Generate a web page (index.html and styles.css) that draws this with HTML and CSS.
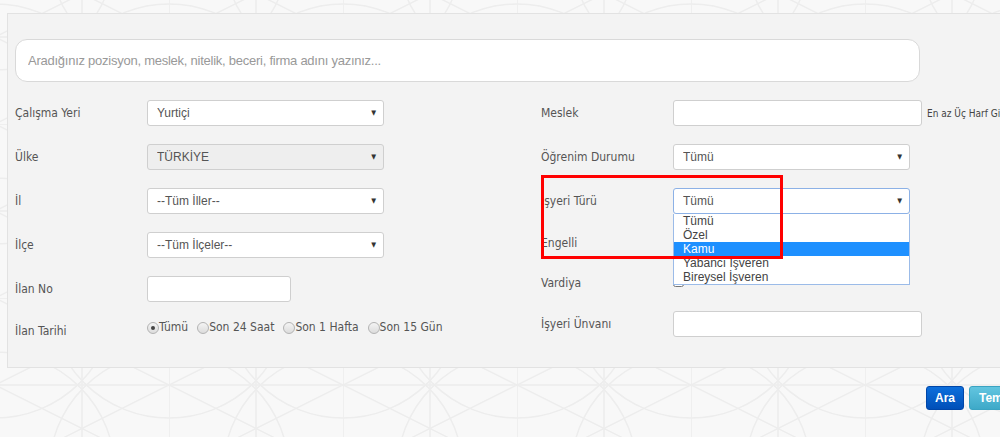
FILE: index.html
```html
<!DOCTYPE html>
<html lang="tr">
  <head>
    <meta charset="UTF-8" />
    <title>İş Ara</title>
    <link rel="stylesheet" href="styles.css">
  </head>
  <body>
    <!-- arka plan deseni -->
    <svg class="bg-pattern" width="100%" height="100%">
      <defs>
        <pattern id="desen" width="174" height="174" patternUnits="userSpaceOnUse" x="-5" y="-50">
          <path d="M0 0V174M87 0V174M0 87H174M0 0H174" />
          <path d="M0 0L174 87M0 87L174 0M0 87L174 174M0 174L174 87" />
          <circle cx="0" cy="0" r="120" />
          <circle cx="174" cy="0" r="120" />
          <circle cx="0" cy="174" r="120" />
          <circle cx="174" cy="174" r="120" />
          <circle cx="87" cy="87" r="120" />
        </pattern>
      </defs>
      <rect width="100%" height="100%" fill="url(#desen)" />
    </svg>

    <div class="page">
      <div class="panel">
        <input class="search" type="text" placeholder="Aradığınız pozisyon, meslek, nitelik, beceri, firma adını yazınız..." />

        <div class="form-grid">
          <div class="col">
            <div class="row">
              <label class="lbl">Çalışma Yeri</label>
              <div class="select-wrap"><select><option>Yurtiçi</option></select></div>
            </div>
            <div class="row">
              <label class="lbl">Ülke</label>
              <div class="select-wrap"><select disabled><option>TÜRKİYE</option></select></div>
            </div>
            <div class="row">
              <label class="lbl">İl</label>
              <div class="select-wrap"><select><option>--Tüm İller--</option></select></div>
            </div>
            <div class="row">
              <label class="lbl">İlçe</label>
              <div class="select-wrap"><select><option>--Tüm İlçeler--</option></select></div>
            </div>
            <div class="row">
              <label class="lbl">İlan No</label>
              <input class="txt txt-short" type="text" />
            </div>
            <div class="row row-radio">
              <label class="lbl">İlan Tarihi</label>
              <div class="radios">
                <label class="radio"><input type="radio" name="tarih" checked />Tümü</label>
                <label class="radio"><input type="radio" name="tarih" />Son 24 Saat</label>
                <label class="radio"><input type="radio" name="tarih" />Son 1 Hafta</label>
                <label class="radio"><input type="radio" name="tarih" />Son 15 Gün</label>
              </div>
            </div>
          </div>

          <div class="col col-right">
            <div class="row">
              <label class="lbl">Meslek</label>
              <input class="txt" type="text" />
              <span class="hint">En az Üç Harf Giriniz</span>
            </div>
            <div class="row">
              <label class="lbl">Öğrenim Durumu</label>
              <div class="select-wrap"><select><option>Tümü</option></select></div>
            </div>
            <div class="row">
              <label class="lbl">İşyeri Türü</label>
              <div class="select-wrap open">
                <select><option>Tümü</option></select>
                <ul class="dropdown">
                  <li>Tümü</li>
                  <li>Özel</li>
                  <li class="active">Kamu</li>
                  <li>Yabancı İşveren</li>
                  <li>Bireysel İşveren</li>
                </ul>
              </div>
            </div>
            <div class="row row-check">
              <label class="lbl">Engelli</label>
              <input class="chk" type="checkbox" />
            </div>
            <div class="row row-check">
              <label class="lbl">Vardiya</label>
              <input class="chk" type="checkbox" />
            </div>
            <div class="row row-last">
              <label class="lbl">İşyeri Ünvanı</label>
              <input class="txt" type="text" />
            </div>
          </div>
        </div>
      </div>

      <div class="actions">
        <button class="btn btn-primary">Ara</button>
        <button class="btn btn-info">Temizle</button>
      </div>
    </div>

    <div class="highlight-box"></div>
  </body>
</html>
```

FILE: styles.css
```css
html,
body {
  margin: 0;
  height: 100%;
}

body {
  background: #f8f8f8;
  font-family: "DejaVu Sans Condensed", "DejaVu Sans", sans-serif;
  font-size: 12px;
  color: #555;
  overflow: hidden;
  position: relative;
}

.bg-pattern {
  position: absolute;
  left: 0;
  top: 0;
  z-index: 0;
}

.bg-pattern path,
.bg-pattern circle {
  fill: none;
  stroke: #ededed;
  stroke-width: 1.5;
}

.page {
  position: relative;
  z-index: 1;
  width: 1036px;
  padding-top: 13px;
}

.panel {
  margin-left: 7px;
  background: #f3f3f3;
  border: 1px solid #e2e2e2;
  padding: 25px 7px 12px 7px;
}

.search {
  display: block;
  box-sizing: border-box;
  width: 905px;
  height: 43px;
  border: 1px solid #d9d9d9;
  border-radius: 12px;
  background: #fff;
  padding: 0 12px;
  font-family: "Liberation Sans", Arial, sans-serif;
  font-size: 13px;
  letter-spacing: -0.25px;
  color: #555;
  outline: none;
}

.search::placeholder {
  color: #999;
}

.form-grid {
  display: flex;
  margin-top: 9px;
}

.col {
  width: 526px;
  flex-shrink: 0;
  display: flex;
  flex-direction: column;
}

.row {
  display: flex;
  align-items: center;
  height: 44px;
}

.row-check {
  height: 40px;
}

.row-last {
  height: 42px;
}

.lbl {
  width: 132px;
  flex-shrink: 0;
  color: #555;
}

.select-wrap {
  position: relative;
  width: 237px;
  height: 26px;
}

.select-wrap select {
  appearance: none;
  width: 100%;
  height: 100%;
  box-sizing: border-box;
  border: 1px solid #cfcfcf;
  border-radius: 3px;
  background: #fff;
  padding: 0 0 0 9px;
  font-family: "Liberation Sans", Arial, sans-serif;
  font-size: 12px;
  color: #555;
  outline: none;
}

.select-wrap select:disabled {
  background: #eee;
  opacity: 1;
}

.select-wrap::after {
  content: "\25BC";
  position: absolute;
  right: 8px;
  top: 9px;
  font-size: 7px;
  color: #333;
  pointer-events: none;
}

.open select {
  border-color: #8cb1e6;
}

.dropdown {
  position: absolute;
  left: 0;
  top: 26px;
  width: 237px;
  box-sizing: border-box;
  margin: 0;
  padding: 0;
  list-style: none;
  background: #fff;
  border: 1px solid #9bbbe8;
  border-top: none;
  z-index: 5;
  font-family: "Liberation Sans", Arial, sans-serif;
  font-size: 12px;
  color: #444;
}

.dropdown li {
  height: 14px;
  line-height: 14px;
  padding-left: 9px;
}

.dropdown li.active {
  background: #1e90ff;
  color: #fff;
}

.txt {
  box-sizing: border-box;
  width: 249px;
  height: 26px;
  border: 1px solid #cfcfcf;
  border-radius: 3px;
  background: #fff;
  outline: none;
}

.txt-short {
  width: 144px;
}

.hint {
  margin-left: 5px;
  font-size: 10px;
  white-space: nowrap;
  color: #444;
}

.chk {
  margin: 0;
  width: 11px;
  height: 11px;
  position: relative;
  top: -2px;
}

.row-radio {
  align-items: flex-start;
  padding-top: 13px;
  box-sizing: border-box;
}

.radios {
  display: flex;
  margin-top: -4px;
}

.radio {
  display: flex;
  align-items: center;
  margin-right: 9px;
}

.radio input {
  appearance: none;
  width: 12px;
  height: 12px;
  margin: 2px 0 0 0;
  border: 1px solid #b3b3b3;
  border-radius: 50%;
  background: linear-gradient(#f4f4f4, #dcdcdc);
  position: relative;
}

.radio input:checked::after {
  content: "";
  position: absolute;
  left: 3px;
  top: 3px;
  width: 4px;
  height: 4px;
  border-radius: 50%;
  background: #444;
}

.actions {
  display: flex;
  justify-content: flex-end;
  gap: 5px;
  margin-top: 18px;
  padding-right: 7px;
}

.btn {
  height: 24px;
  border-radius: 3px;
  font-family: "Liberation Sans", Arial, sans-serif;
  font-size: 12px;
  font-weight: bold;
  color: #fff;
  padding: 0 9px;
}

.btn-primary {
  width: 38px;
  padding: 0;
  background: linear-gradient(#0c6fdc, #004fb8);
  border: 1px solid #0046a8;
}

.btn-info {
  width: 60px;
  background: linear-gradient(#62c5e0, #3ea9c8);
  border: 1px solid #3aa3c2;
}

.highlight-box {
  position: absolute;
  left: 541px;
  top: 175px;
  width: 236px;
  height: 78px;
  border: 3px solid #ff0000;
  z-index: 10;
}
```
